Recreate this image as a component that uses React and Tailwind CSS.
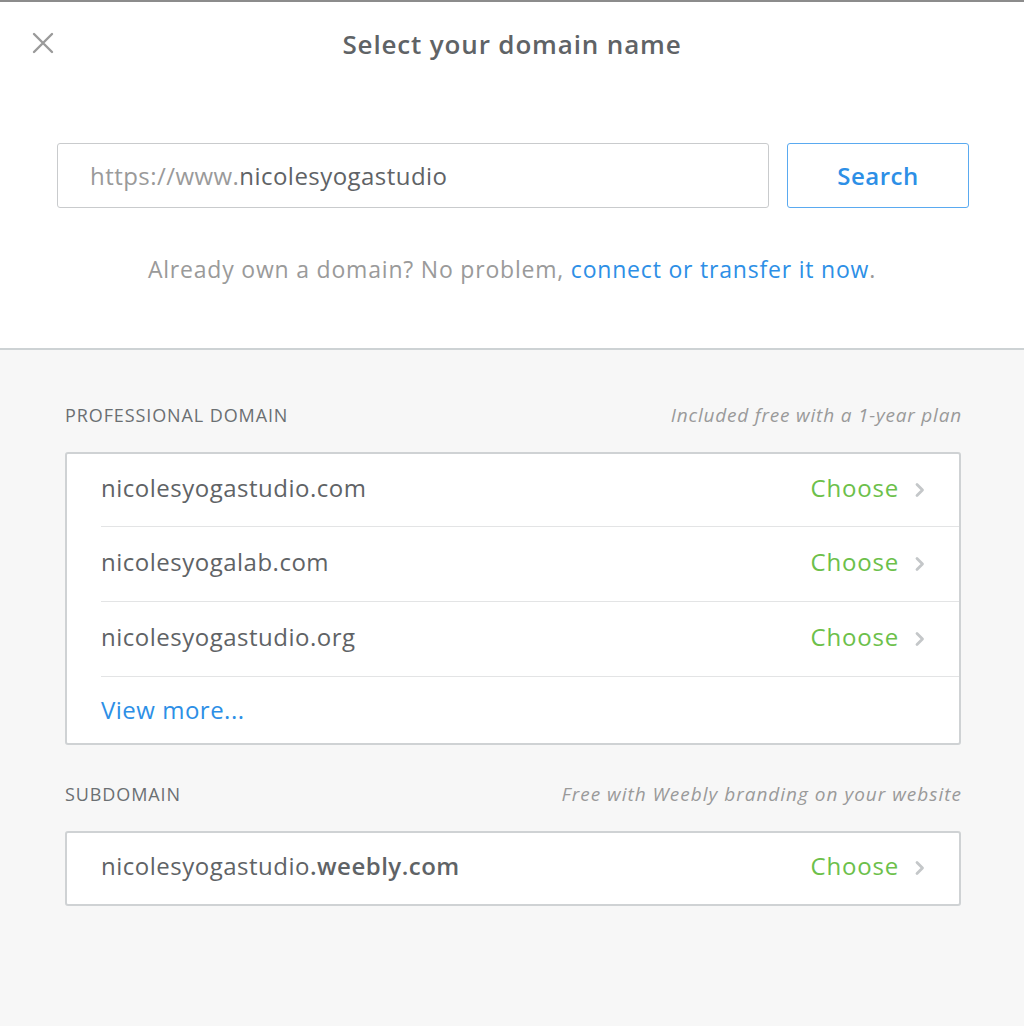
import React from "react";

const font = { fontFamily: "'Open Sans', Lato, sans-serif" };

function Chevron() {
  return (
    <svg width="14" height="18" viewBox="0 0 14 18" className="ml-[14px] mt-[4px]">
      <path d="M4 3.5 L9.5 9 L4 14.5" fill="none" stroke="#c4c7c9" strokeWidth="2.8" strokeLinecap="round" strokeLinejoin="round" />
    </svg>
  );
}

function Row({ children, last, h = "h-[75px]" }) {
  return (
    <div className={`ml-[34px] flex items-center pb-[5px] pr-[32px] ${h} ${last ? "" : "border-b border-[#e3e4e5]"}`}>
      <div className="flex-1 text-[24px] tracking-[0.5px] text-[#5f6366]">{children}</div>
      <span className="text-[24px] tracking-[0.8px] text-[#6cc04a]">Choose</span>
      <Chevron />
    </div>
  );
}

export default function App() {
  return (
    <div className="min-h-[1027px] w-[1024px] bg-white" style={font}>
      <div className="h-[2px] bg-[#8c8c8c]" />
      <div className="relative flex h-[84px] items-center justify-center">
        <svg className="absolute left-[32px] top-[30px]" width="22" height="22" viewBox="0 0 22 22">
          <path d="M2 2 L20 20 M20 2 L2 20" stroke="#9a9a9a" strokeWidth="2.4" strokeLinecap="round" />
        </svg>
        <h1 className="text-[26px] font-semibold tracking-[0.85px] text-[#5f6366]">Select your domain name</h1>
      </div>
      <div className="flex gap-[18px] pl-[57px] pr-[55px] pt-[57px]">
        <div className="flex h-[65px] flex-1 items-center rounded-[3px] border border-[#c9cbcd] pl-[32px] text-[24px] tracking-[0.45px]">
          <span className="text-[#9a9a9a]">https://www.</span>
          <span className="text-[#5f6366]">nicolesyogastudio</span>
        </div>
        <button className="h-[65px] w-[182px] rounded-[3px] border border-[#5aaaf0] text-[24px] font-semibold tracking-[0.5px] text-[#2d8fe6]">
          Search
        </button>
      </div>
      <p className="pt-[44px] text-center text-[23px] tracking-[0.8px] text-[#9a9a9a]">
        Already own a domain? No problem, <span className="text-[#2d8fe6]">connect or transfer it now</span>.
      </p>
      <div className="mt-[61px] min-h-[678px] border-t-2 border-[#cdd2d4] bg-[#f7f7f7] px-[65px] pt-[51px]">
        <div className="-mr-[3px] flex items-baseline justify-between">
          <span className="text-[18px] uppercase tracking-[0.9px] text-[#6b6f72]">Professional domain</span>
          <span className="text-[19px] italic tracking-[0.8px] text-[#9a9a9a]">Included free with a 1-year plan</span>
        </div>
        <div className="mt-[23px] w-[896px] rounded-[3px] border-2 border-[#cfd2d4] bg-white">
          <Row h="h-[73px]">nicolesyogastudio.com</Row>
          <Row>nicolesyogalab.com</Row>
          <Row>nicolesyogastudio.org</Row>
          <div className="ml-[34px] flex h-[66px] items-center text-[24px] tracking-[0.5px] text-[#2d8fe6]">View more...</div>
        </div>
        <div className="-mr-[3px] mt-[35px] flex items-baseline justify-between">
          <span className="text-[18px] uppercase tracking-[0.9px] text-[#6b6f72]">Subdomain</span>
          <span className="text-[19px] italic tracking-[1px] text-[#9a9a9a]">Free with Weebly branding on your website</span>
        </div>
        <div className="mt-[22px] w-[896px] rounded-[3px] border-2 border-[#cfd2d4] bg-white">
          <Row last h="h-[71px]">
            nicolesyogastudio<span className="font-semibold">.weebly.com</span>
          </Row>
        </div>
      </div>
    </div>
  );
}
